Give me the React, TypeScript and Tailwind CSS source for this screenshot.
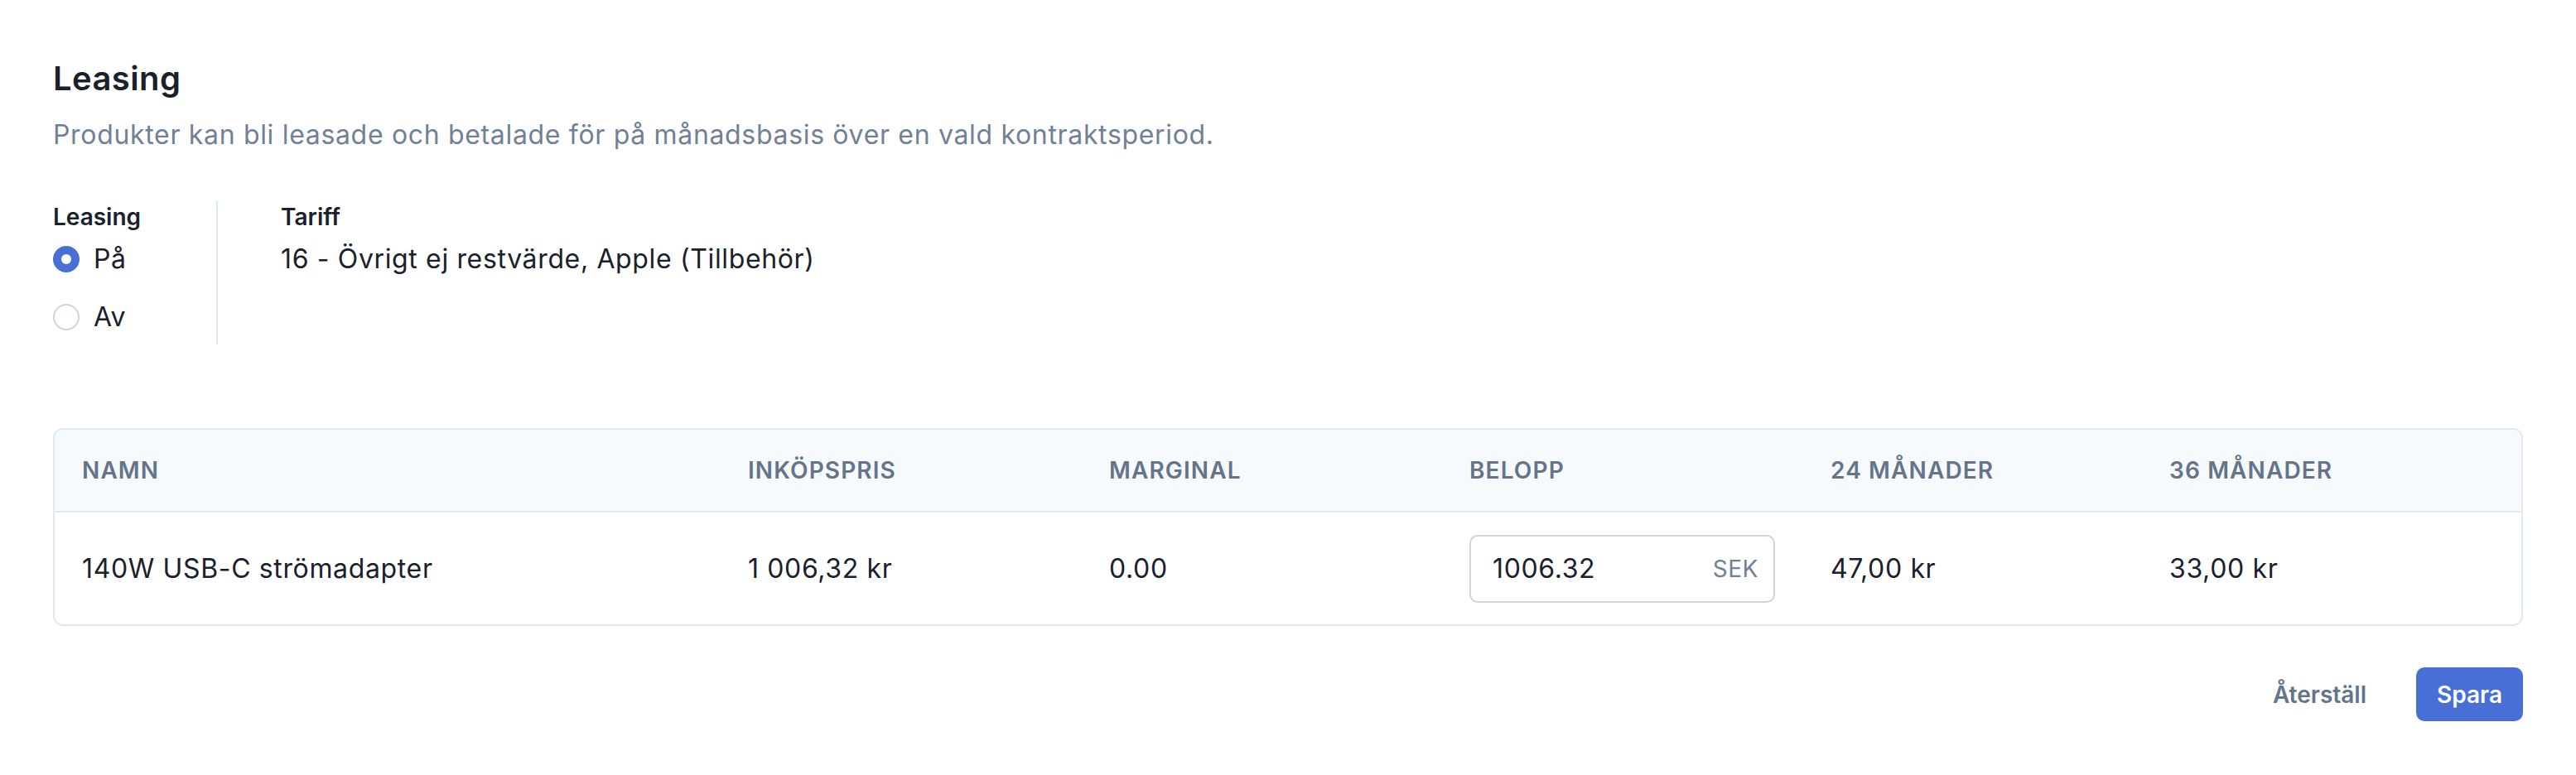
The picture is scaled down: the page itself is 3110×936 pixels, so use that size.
import { useState } from 'react'

const COLUMNS = [
  { label: 'Namn', width: 'w-[804px]' },
  { label: 'Inköpspris', width: 'w-[436px]' },
  { label: 'Marginal', width: 'w-[435px]' },
  { label: 'Belopp', width: 'w-[436px]' },
  { label: '24 månader', width: 'w-[409px]' },
  { label: '36 månader', width: 'w-auto' },
]

function Radio({ label, checked, onSelect }: { label: string; checked: boolean; onSelect: () => void }) {
  return (
    <label className="flex h-[48px] cursor-pointer items-center gap-[17px]" onClick={onSelect}>
      {checked ? (
        <span className="flex size-[32px] items-center justify-center rounded-full bg-[#476fd6]">
          <span className="size-[12px] rounded-full bg-white" />
        </span>
      ) : (
        <span className="size-[32px] rounded-full border-2 border-[#cbd5e0] bg-white" />
      )}
      <span className="text-[32px] leading-[48px] tracking-[0.02em] text-[#1a202c]">{label}</span>
    </label>
  )
}

export default function App() {
  const [leasing, setLeasing] = useState(true)
  const [amount, setAmount] = useState('1006.32')

  return (
    <div className="min-h-[936px] bg-white px-[64px] pt-[71px] pb-[63px] font-['Inter',sans-serif] text-[#1a202c]">
      {/* Heading */}
      <h2 className="text-[40px] leading-[48px] font-semibold tracking-[0.01em] text-[#1a202c]">Leasing</h2>
      <p className="mt-[20px] text-[32px] leading-[48px] tracking-[0.021em] text-[#718096]">
        Produkter kan bli leasade och betalade för på månadsbasis över en vald kontraktsperiod.
      </p>

      {/* Settings */}
      <div className="mt-[55px] flex">
        <div className="w-[199px] border-r-2 border-[#e2e8f0] pb-[9px]">
          <div className="text-[28px] leading-[40px] font-semibold">Leasing</div>
          <div className="mt-[7px] flex flex-col gap-[22px]">
            <Radio label="På" checked={leasing} onSelect={() => setLeasing(true)} />
            <Radio label="Av" checked={!leasing} onSelect={() => setLeasing(false)} />
          </div>
        </div>
        <div className="pl-[76px]">
          <div className="text-[28px] leading-[40px] font-semibold">Tariff</div>
          <div className="mt-[7px] text-[32px] leading-[48px] tracking-[0.02em]">
            16 - Övrigt ej restvärde, Apple (Tillbehör)
          </div>
        </div>
      </div>

      {/* Table */}
      <div className="mt-[101px] overflow-hidden rounded-[12px] border-2 border-[#e2e8f0]">
        <table className="w-full table-fixed border-collapse">
          <colgroup>
            {COLUMNS.map((c) => (
              <col key={c.label} className={c.width} />
            ))}
          </colgroup>
          <thead>
            <tr className="bg-[#f7fafc]">
              {COLUMNS.map((c) => (
                <th
                  key={c.label}
                  className="h-[99px] border-b-2 border-[#e2e8f0] px-[33px] text-left align-middle text-[28px] font-semibold tracking-[0.04em] text-[#64748b] uppercase"
                >
                  {c.label}
                </th>
              ))}
            </tr>
          </thead>
          <tbody>
            <tr className="text-[32px] tracking-[0.02em]">
              <td className="h-[136px] px-[33px] align-middle">140W USB-C strömadapter</td>
              <td className="px-[33px] align-middle">1 006,32 kr</td>
              <td className="px-[33px] align-middle">0.00</td>
              <td className="px-[33px] align-middle">
                <div className="flex h-[82px] w-[369px] items-center rounded-[10px] border-2 border-[#cbd5e0] pr-[18px] pl-[26px]">
                  <input
                    value={amount}
                    onChange={(e) => setAmount(e.target.value)}
                    className="min-w-0 flex-1 bg-transparent text-[32px] tracking-[0.02em] text-[#1a202c] outline-none"
                  />
                  <span className="text-[28px] tracking-[0.02em] text-[#718096]">SEK</span>
                </div>
              </td>
              <td className="px-[33px] align-middle">47,00 kr</td>
              <td className="px-[33px] align-middle">33,00 kr</td>
            </tr>
          </tbody>
        </table>
      </div>

      {/* Actions */}
      <div className="mt-[50px] flex items-center justify-end gap-[36px]">
        <button
          type="button"
          className="h-[64px] rounded-[10px] px-[24px] text-[28px] font-semibold text-[#64748b]"
        >
          Återställ
        </button>
        <button
          type="button"
          className="h-[65px] rounded-[10px] bg-[#476fd6] px-[25px] text-[28px] font-semibold text-white"
        >
          Spara
        </button>
      </div>
    </div>
  )
}
